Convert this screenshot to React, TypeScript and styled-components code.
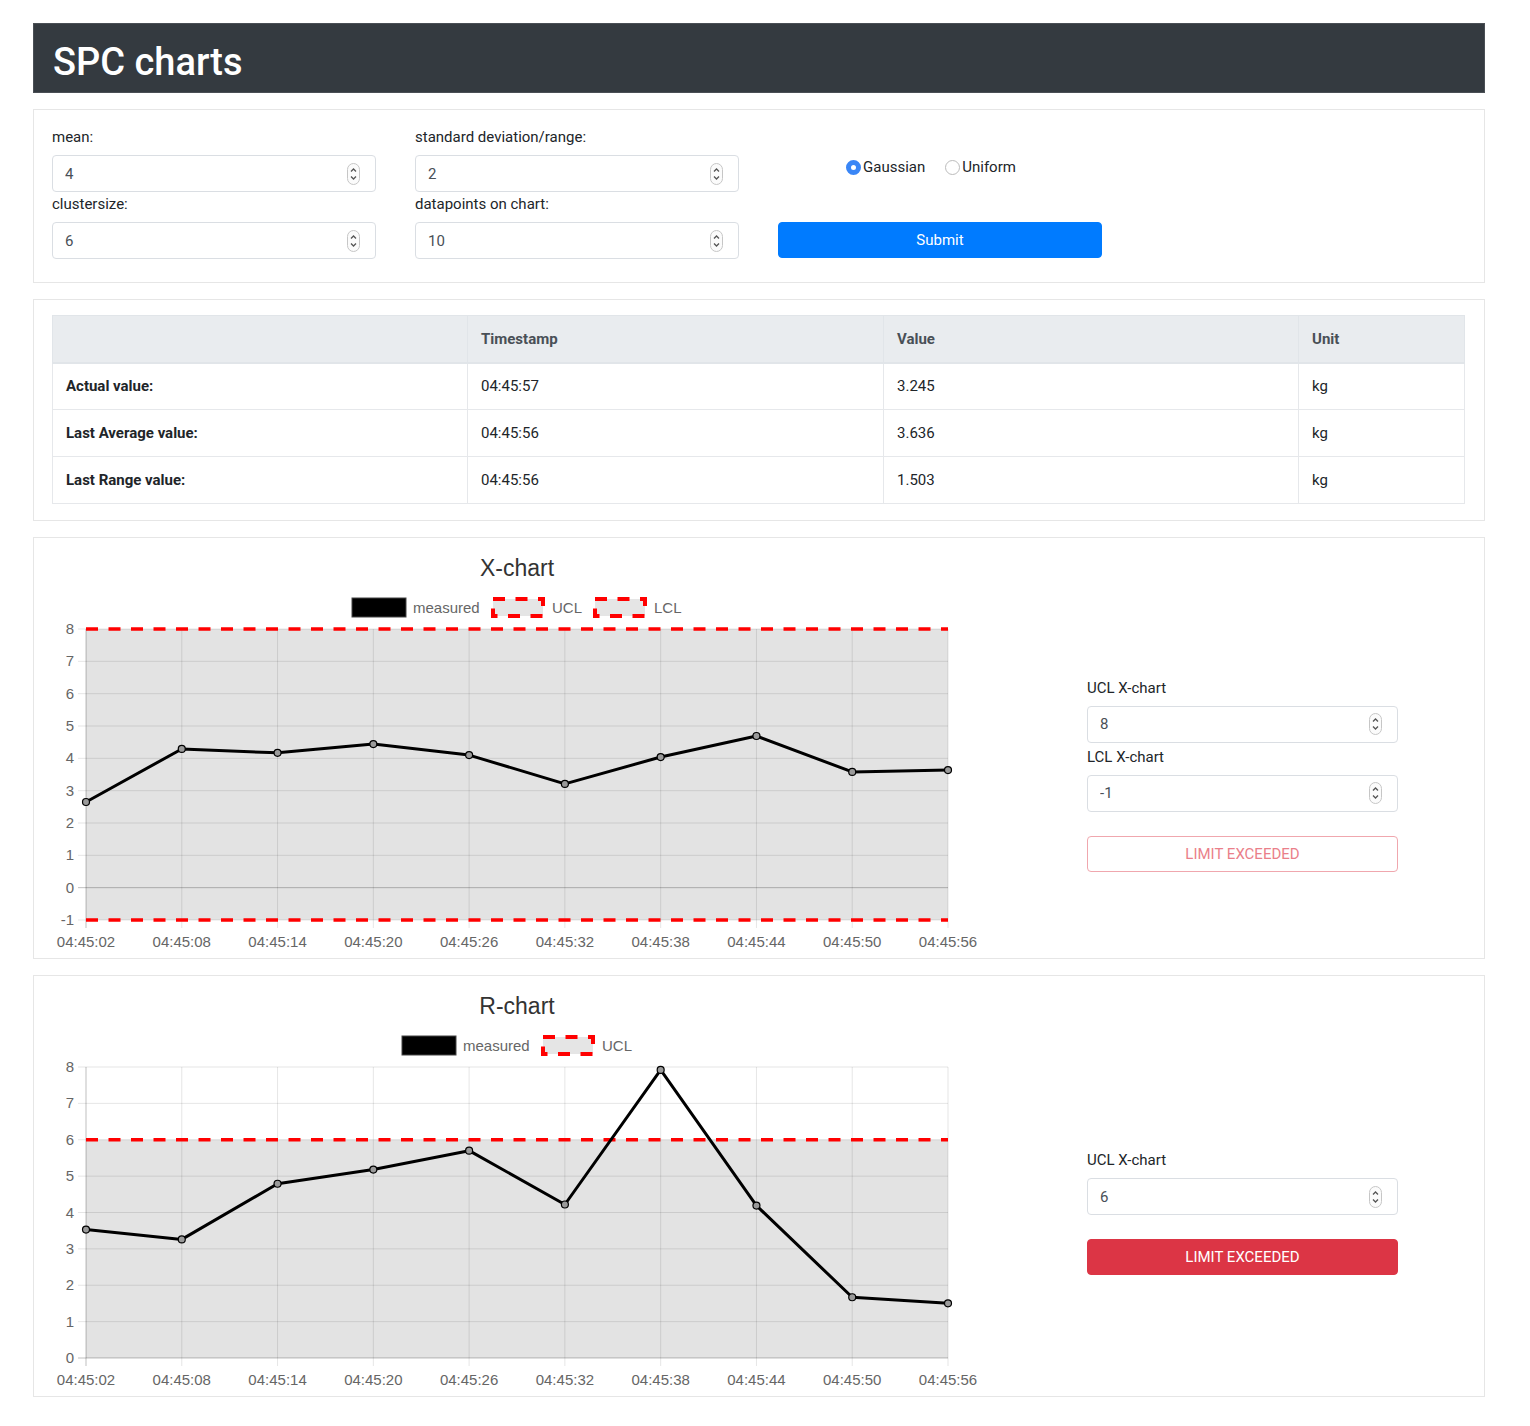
import * as React from 'react'
import styled, { createGlobalStyle } from 'styled-components'

const GlobalStyle = createGlobalStyle`
  body {
    margin: 0;
    background: #fff;
    font-family: Roboto, 'Liberation Sans', Arial, sans-serif;
    color: #212529;
  }
  * {
    box-sizing: border-box;
  }
`

const Page = styled.div`
  width: 1452px;
  margin-left: 33px;
  padding: 23px 0 28px;
  display: flex;
  flex-direction: column;
  gap: 16px;
`

const Header = styled.header`
  height: 70px;
  background: #343a40;
  border: 1px solid #4a4f55;
  padding: 15px 19px 0;
`

const Title = styled.h1`
  margin: 0;
  font-size: 38px;
  line-height: 46px;
  font-weight: 500;
  color: #fff;
`

const Card = styled.section`
  border: 1px solid #e6e6e6;
  background: #fff;
`

const FormCard = styled(Card)`
  padding: 16px 18px 23px;
`

const FormGrid = styled.div`
  display: grid;
  grid-template-columns: repeat(3, 324px);
  column-gap: 39px;
  row-gap: 1px;
`

const Field = styled.div`
  display: flex;
  flex-direction: column;
`

const Label = styled.label`
  font-size: 15px;
  line-height: 22px;
  margin-bottom: 7px;
  color: #212529;
`

const InputBox = styled.div`
  display: flex;
  align-items: center;
  height: 37px;
  border: 1px solid #dadee3;
  border-radius: 4px;
  padding: 0 15px 0 12px;
  background: #fff;
`

const InputText = styled.input`
  flex: 1;
  min-width: 0;
  border: 0;
  outline: 0;
  padding: 0;
  background: transparent;
  font-family: inherit;
  font-size: 15px;
  color: #495057;
`

const RadioGroup = styled.div`
  align-self: start;
  display: flex;
  align-items: center;
  gap: 20px;
  padding: 31px 0 0 68px;
`

const RadioOption = styled.label`
  display: inline-flex;
  align-items: center;
  gap: 2px;
  font-size: 15px;
  line-height: 20px;
  color: #212529;
`

const RadioDot = styled.span<{ $checked?: boolean }>`
  display: inline-block;
  width: 15px;
  height: 15px;
  border-radius: 50%;
  background: #fff;
  border: ${p => (p.$checked ? '5px solid #3a86f6' : '1px solid #bcbcbc')};
`

const Button = styled.button<{ $variant: 'primary' | 'danger' | 'outline' }>`
  width: 100%;
  height: 36px;
  border-radius: 4px;
  font-family: inherit;
  font-size: 15px;
  cursor: pointer;
  border: 1px solid
    ${p =>
      p.$variant === 'primary' ? '#007bff' : p.$variant === 'danger' ? '#dc3545' : '#f0a7ae'};
  background: ${p =>
    p.$variant === 'primary' ? '#007bff' : p.$variant === 'danger' ? '#dc3545' : '#fff'};
  color: ${p => (p.$variant === 'outline' ? '#ea7f8a' : '#fff')};
`

const SubmitCell = styled.div`
  align-self: end;
  margin-bottom: 1px;
`

const TableCard = styled(Card)`
  padding: 15px 19px 16px 18px;
`

const Table = styled.table`
  width: 100%;
  border-collapse: collapse;
  table-layout: fixed;
  font-size: 15px;
`

const Col = styled.col<{ $w?: number }>`
  width: ${p => (p.$w ? `${p.$w}px` : 'auto')};
`

const Th = styled.th`
  height: 47px;
  padding: 0 13px;
  text-align: left;
  font-weight: 700;
  color: #495057;
  background: #e9ecef;
  border: 1px solid #e1e5e9;
  border-bottom-width: 2px;
`

const Td = styled.td<{ $head?: boolean }>`
  height: 47px;
  padding: 0 13px;
  border: 1px solid #e6e8eb;
  font-weight: ${p => (p.$head ? 700 : 400)};
  color: #212529;
`

const ChartCard = styled(Card)`
  display: grid;
  grid-template-columns: 938px 1fr;
  align-items: center;
  padding-left: 18px;
`

const ChartSvg = styled.svg`
  display: block;
  font-family: 'Liberation Sans', Arial, Helvetica, sans-serif;
`

const LimitPanel = styled.div`
  width: 311px;
  margin-left: 97px;
  margin-top: 52px;
  display: flex;
  flex-direction: column;
  gap: 3px;
`

const PanelButton = styled.div`
  margin-top: 21px;
`

const Spinner: React.FC = () => (
  <svg width="13" height="22" viewBox="0 0 13 22">
    <rect x="0.5" y="0.5" width="12" height="21" rx="6" fill="#fbfbfb" stroke="#c6c6c6" />
    <path d="M4 8.5 L6.5 6 L9 8.5" fill="none" stroke="#555" strokeWidth="1.3" />
    <path d="M4 13.5 L6.5 16 L9 13.5" fill="none" stroke="#555" strokeWidth="1.3" />
  </svg>
)

const NumberField: React.FC<{ label: string; value: string }> = ({ label, value }) => (
  <Field>
    <Label>{label}</Label>
    <InputBox>
      <InputText type="text" defaultValue={value} />
      <Spinner />
    </InputBox>
  </Field>
)

// chart

const LABELS = [
  '04:45:02',
  '04:45:08',
  '04:45:14',
  '04:45:20',
  '04:45:26',
  '04:45:32',
  '04:45:38',
  '04:45:44',
  '04:45:50',
  '04:45:56',
]

const PLOT = { left: 34, right: 896, top: 91, bottom: 382 }
const LEGEND_TEXT: Record<string, number> = { measured: 67, UCL: 30, LCL: 28 }
const GRID = 'rgba(0,0,0,0.1)'
const ZERO = 'rgba(0,0,0,0.25)'
const RED = '#ff0000'
const DASH = '12 10.5'

type Limit = { label: string; value: number }

interface ChartProps {
  title: string
  data: number[]
  yMin: number
  yMax: number
  limits: Limit[]
}

const SpcChart: React.FC<ChartProps> = ({ title, data, yMin, yMax, limits }) => {
  const xAt = (i: number) => PLOT.left + (i * (PLOT.right - PLOT.left)) / (LABELS.length - 1)
  const yAt = (v: number) =>
    PLOT.bottom - ((v - yMin) * (PLOT.bottom - PLOT.top)) / (yMax - yMin)

  const ticks: number[] = []
  for (let v = yMin; v <= yMax; v++) ticks.push(v)

  const legend = [{ label: 'measured', dashed: false }, ...limits.map(l => ({ label: l.label, dashed: true }))]
  const total =
    legend.reduce((s, it) => s + 54 + 7 + LEGEND_TEXT[it.label], 0) + 11 * (legend.length - 1)
  let lx = 465 - total / 2
  const legendItems = legend.map(it => {
    const x = lx
    lx += 54 + 7 + LEGEND_TEXT[it.label] + 11
    return { ...it, x }
  })

  const points = data.map((v, i) => `${xAt(i)},${yAt(v)}`).join(' ')

  return (
    <ChartSvg width="938" height="420" viewBox="0 0 938 420">
      <text x="465" y="38" textAnchor="middle" fontSize="23" fill="#333">
        {title}
      </text>

      {legendItems.map(it => (
        <g key={it.label}>
          {it.dashed ? (
            <rect
              x={it.x + 2}
              y={61}
              width={50}
              height={17}
              fill="rgba(0,0,0,0.1)"
              stroke={RED}
              strokeWidth="4"
              strokeDasharray={DASH}
            />
          ) : (
            <rect x={it.x} y={60} width={54} height={19} fill="#000" stroke="#444" strokeWidth="1" />
          )}
          <text x={it.x + 61} y={75} fontSize="15" fill="#666">
            {it.label}
          </text>
        </g>
      ))}

      {limits.map(l => (
        <rect
          key={`fill-${l.label}`}
          x={PLOT.left}
          y={Math.min(yAt(l.value), yAt(0))}
          width={PLOT.right - PLOT.left}
          height={Math.abs(yAt(l.value) - yAt(0))}
          fill="rgba(0,0,0,0.11)"
        />
      ))}

      {LABELS.map((_, i) => (
        <line
          key={`vx-${i}`}
          x1={xAt(i)}
          x2={xAt(i)}
          y1={PLOT.top}
          y2={PLOT.bottom + 8}
          stroke={i === 0 ? ZERO : GRID}
          strokeWidth="1"
        />
      ))}
      {ticks.map(v => (
        <line
          key={`hy-${v}`}
          x1={PLOT.left - 8}
          x2={PLOT.right}
          y1={yAt(v)}
          y2={yAt(v)}
          stroke={v === 0 ? ZERO : GRID}
          strokeWidth="1"
        />
      ))}

      {ticks.map(v => (
        <text key={`yl-${v}`} x={PLOT.left - 12} y={yAt(v) + 5} textAnchor="end" fontSize="15" fill="#666">
          {v}
        </text>
      ))}
      {LABELS.map((t, i) => (
        <text key={`xl-${t}`} x={xAt(i)} y={409} textAnchor="middle" fontSize="15" fill="#666">
          {t}
        </text>
      ))}

      {limits.map(l => (
        <line
          key={`lim-${l.label}`}
          x1={PLOT.left}
          x2={PLOT.right}
          y1={yAt(l.value)}
          y2={yAt(l.value)}
          stroke={RED}
          strokeWidth="3.5"
          strokeDasharray={DASH}
        />
      ))}

      <polyline points={points} fill="none" stroke="#000" strokeWidth="3" strokeLinejoin="round" />
      {data.map((v, i) => (
        <circle key={`p-${i}`} cx={xAt(i)} cy={yAt(v)} r="3.5" fill="#9a9a9a" stroke="#000" strokeWidth="1.2" />
      ))}
    </ChartSvg>
  )
}

const X_DATA = [2.65, 4.29, 4.17, 4.44, 4.1, 3.21, 4.04, 4.69, 3.58, 3.636]
const R_DATA = [3.53, 3.26, 4.79, 5.18, 5.7, 4.22, 7.92, 4.19, 1.67, 1.503]

const ROWS = [
  { name: 'Actual value:', time: '04:45:57', value: '3.245', unit: 'kg' },
  { name: 'Last Average value:', time: '04:45:56', value: '3.636', unit: 'kg' },
  { name: 'Last Range value:', time: '04:45:56', value: '1.503', unit: 'kg' },
]

const App: React.FC = () => (
  <>
    <GlobalStyle />
    <Page>
      <Header>
        <Title>SPC charts</Title>
      </Header>

      <FormCard>
        <FormGrid>
          <NumberField label="mean:" value="4" />
          <NumberField label="standard deviation/range:" value="2" />
          <RadioGroup>
            <RadioOption>
              <RadioDot $checked />
              Gaussian
            </RadioOption>
            <RadioOption>
              <RadioDot />
              Uniform
            </RadioOption>
          </RadioGroup>
          <NumberField label="clustersize:" value="6" />
          <NumberField label="datapoints on chart:" value="10" />
          <SubmitCell>
            <Button $variant="primary">Submit</Button>
          </SubmitCell>
        </FormGrid>
      </FormCard>

      <TableCard>
        <Table>
          <colgroup>
            <Col $w={415} />
            <Col $w={416} />
            <Col $w={415} />
            <Col />
          </colgroup>
          <thead>
            <tr>
              <Th />
              <Th>Timestamp</Th>
              <Th>Value</Th>
              <Th>Unit</Th>
            </tr>
          </thead>
          <tbody>
            {ROWS.map(r => (
              <tr key={r.name}>
                <Td $head>{r.name}</Td>
                <Td>{r.time}</Td>
                <Td>{r.value}</Td>
                <Td>{r.unit}</Td>
              </tr>
            ))}
          </tbody>
        </Table>
      </TableCard>

      <ChartCard>
        <SpcChart
          title="X-chart"
          data={X_DATA}
          yMin={-1}
          yMax={8}
          limits={[
            { label: 'UCL', value: 8 },
            { label: 'LCL', value: -1 },
          ]}
        />
        <LimitPanel>
          <NumberField label="UCL X-chart" value="8" />
          <NumberField label="LCL X-chart" value="-1" />
          <PanelButton>
            <Button $variant="outline">LIMIT EXCEEDED</Button>
          </PanelButton>
        </LimitPanel>
      </ChartCard>

      <ChartCard>
        <SpcChart title="R-chart" data={R_DATA} yMin={0} yMax={8} limits={[{ label: 'UCL', value: 6 }]} />
        <LimitPanel>
          <NumberField label="UCL X-chart" value="6" />
          <PanelButton>
            <Button $variant="danger">LIMIT EXCEEDED</Button>
          </PanelButton>
        </LimitPanel>
      </ChartCard>
    </Page>
  </>
)

export default App
